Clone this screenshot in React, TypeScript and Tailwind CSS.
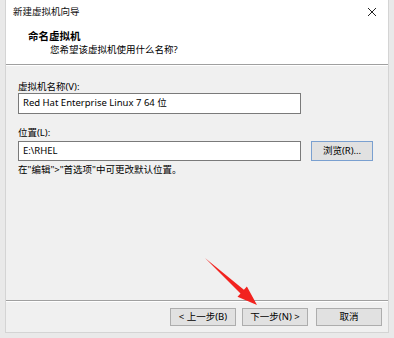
import React from "react";

const font = "font-['Noto_Sans','Noto_Sans_CJK_SC',sans-serif]";

function WinButton({ label, className = "" }: { label: string; className?: string }) {
  return (
    <button
      className={`flex h-[18px] w-[66px] items-center justify-center border border-[#adadad] bg-[#e1e1e1] text-[9.5px] leading-none text-black ${className}`}
    >
      {label}
    </button>
  );
}

function CloseIcon() {
  return (
    <svg width="10" height="10" viewBox="0 0 10 10" className="text-[#222]">
      <path d="M1 1L9 9M9 1L1 9" stroke="currentColor" strokeWidth="1" />
    </svg>
  );
}

export default function App() {
  return (
    <div className={`relative h-[338px] w-[394px] bg-[#e9e9e9] pl-[5px] pr-[5px] pb-[5px] ${font}`}>
      <div className="flex h-full w-full flex-col border-x border-b border-[#d4d4d4] bg-[#f0f0f0] text-black">
        {/* title + header */}
        <div className="bg-white">
          <div className="flex h-[24px] items-center justify-between pl-[7px] pr-[11px]">
            <span className="text-[9.5px] text-[#111]">新建虚拟机向导</span>
            <CloseIcon />
          </div>
          <div className="flex h-[40px] flex-col pl-[22px] pt-[6px]">
            <span className="text-[10.5px] font-bold leading-[13px]">命名虚拟机</span>
            <span className="pl-[22px] text-[9.5px] leading-[13px]">您希望该虚拟机使用什么名称?</span>
          </div>
        </div>
        <div className="h-px bg-[#a0a0a0]" />
        <div className="h-px bg-white" />

        {/* body */}
        <div className="flex flex-1 flex-col px-[12px] pt-[14px]">
          <label className="text-[9.5px] leading-[14px]">虚拟机名称(V):</label>
          <div className="mt-[-1px] flex h-[21px] w-[283px] items-center border border-[#7a7a7a] bg-white pl-[4px] text-[9.5px]">
            Red Hat Enterprise Linux 7 64 位
          </div>
          <label className="mt-[12px] text-[9.5px] leading-[14px]">位置(L):</label>
          <div className="mt-[1px] flex items-center gap-[10px]">
            <div className="flex h-[20px] w-[283px] items-center border border-[#7a7a7a] bg-white pl-[4px] text-[9.5px]">
              E:\RHEL
            </div>
            <button className="flex h-[20px] w-[62px] items-center justify-center border border-[#7aa0d0] bg-[#e1e1e1] text-[9.5px] leading-none">
              浏览(R)...
            </button>
          </div>
          <p className="mt-[2px] text-[9.5px] leading-[14px]">在"编辑"&gt;"首选项"中可更改默认位置。</p>
        </div>

        {/* footer */}
        <div className="h-px bg-[#a0a0a0]" />
        <div className="h-px bg-white" />
        <div className="flex h-[30px] items-start justify-end gap-[6px] pr-[6px] pt-[6px]">
          <WinButton label="< 上一步(B)" />
          <WinButton label="下一步(N) >" />
          <WinButton label="取消" className="ml-[2px]" />
        </div>
      </div>

      {/* red annotation arrow */}
      <svg className="pointer-events-none absolute left-0 top-0" width="394" height="338" viewBox="0 0 394 338">
        <polygon
          points="205,258 243.9,289.7 246.9,286.4 257,305 237.5,296.8 240.5,293.5"
          fill="#f2231f"
        />
      </svg>
    </div>
  );
}
